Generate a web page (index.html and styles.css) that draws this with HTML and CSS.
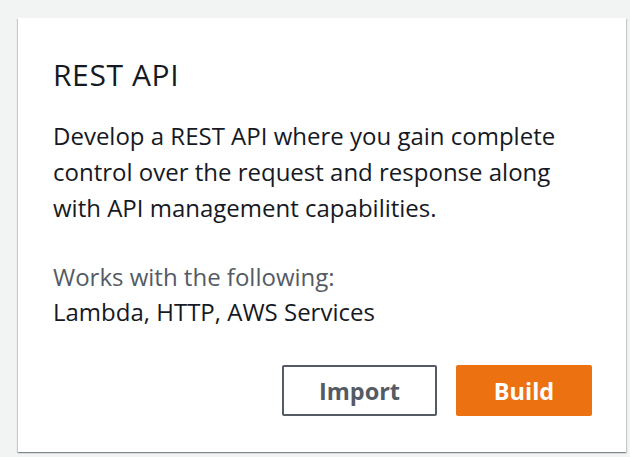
FILE: index.html
```html
<!DOCTYPE html>
<html>
<head>
<meta charset="utf-8">
<link rel="stylesheet" href="styles.css">
</head>
<body>
<div class="card">
  <h2 class="title">REST API</h2>
  <p class="desc">Develop a REST API where you gain complete control over the request and response along with API management capabilities.</p>
  <div class="works">
    <div class="works-label">Works with the following:</div>
    <div class="works-list">Lambda, HTTP, AWS Services</div>
  </div>
  <div class="actions">
    <button class="btn btn-normal">Import</button>
    <button class="btn btn-primary">Build</button>
  </div>
</div>
</body>
</html>
```
FILE: styles.css
```css
html, body { margin: 0; padding: 0; }
body {
  background: #f2f3f3;
  width: 630px;
  height: 457px;
  padding: 18px 0 0 18px;
  box-sizing: border-box;
  font-family: "Open Sans", "Noto Sans", sans-serif;
  color: #16191f;
}
.card {
  width: 608px;
  height: 434px;
  box-sizing: border-box;
  background: #fff;
  box-shadow: 0 1px 1px 0 rgba(0,28,36,0.3), 1px 1px 1px 0 rgba(0,28,36,0.15), -1px 1px 1px 0 rgba(0,28,36,0.15);
  padding: 37px 34px 0 35px;
  display: flex;
  flex-direction: column;
}
.title {
  margin: 0;
  font-size: 30px;
  font-weight: 400;
  line-height: 40px;
  letter-spacing: 0.6px;
}
.desc {
  margin: 23px 0 0 0;
  font-size: 24px;
  line-height: 36px;
}
.works { margin-top: 33px; font-size: 24px; line-height: 35px; }
.works-label { color: #545b64; }
.actions {
  display: flex;
  justify-content: flex-end;
  gap: 19px;
  margin-top: 36px;
}
.btn {
  font-family: "Open Sans", "Noto Sans", sans-serif;
  font-size: 23.5px;
  font-weight: 700;
  height: 51px;
  border-radius: 2px;
  cursor: pointer;
  padding: 0;
}
.btn-normal {
  width: 155px;
  background: #fff;
  border: 2px solid #545b64;
  color: #545b64;
}
.btn-primary {
  width: 136px;
  background: #ec7211;
  border: 2px solid #ec7211;
  color: #fff;
}
```
